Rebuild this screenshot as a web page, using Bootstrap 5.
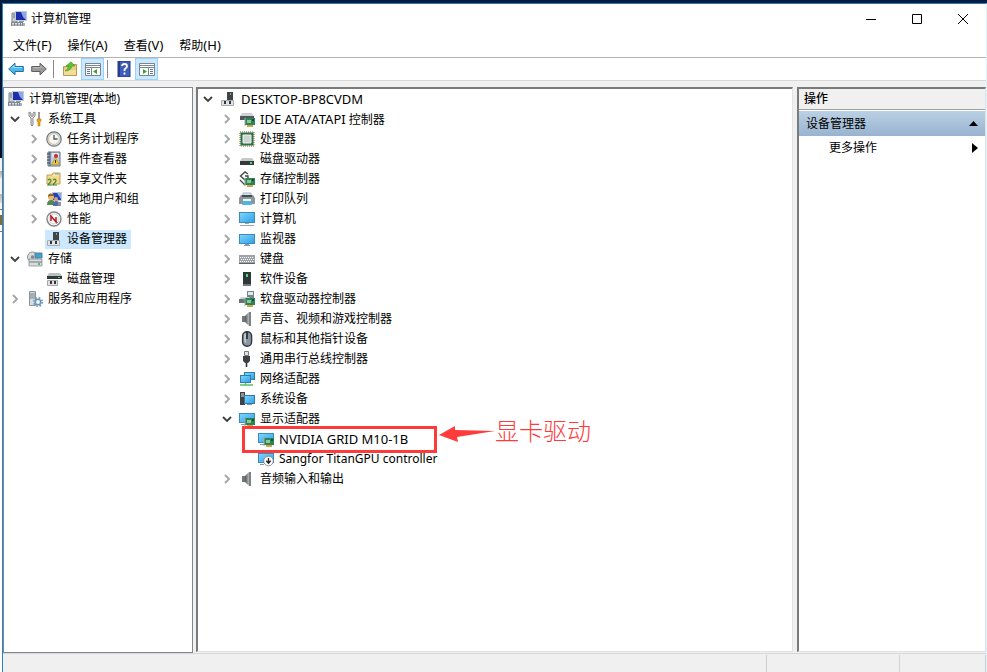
<!DOCTYPE html>
<html lang="zh-CN">
<head>
<meta charset="utf-8">
<meta name="viewport" content="width=device-width, initial-scale=1">
<title>计算机管理</title>
<link href="https://cdn.jsdelivr.net/npm/bootstrap@5.3.0/dist/css/bootstrap.min.css" rel="stylesheet">
<style>
body{font:12px/20px "Noto Sans","Noto Sans CJK SC",sans-serif;color:#000;background:#001d40}
.desk{width:2px;background:linear-gradient(#001a3a,#00102a 155px,#f3f3f3 155px,#f3f3f3 168px,#aaa 168px,#ddd 175px,#f3f3f3 175px,#f3f3f3 191px,#b5b5b5 191px,#ddd 200px,#f3f3f3 200px,#f3f3f3 206px,#777 206px,#777 207px,#fff 207px,#fff 212px,#77703a 212px,#77703a 222px,#fff 222px,#fff 228px,#777 228px,#777 229px,#fff 229px)}
.defs{width:0;height:0}
.strip{height:3px;background:#001d40}
.win{border-top:1px solid #2478b4;border-left:1px solid #2787c8;border-right:1px solid #dff3fa;background:#fff}
.titlebar{height:29px;padding-left:8px}
.cap{width:46px;height:28px;border:0;background:none;padding:0}
.plain{border:0;background:none;padding:0;color:inherit;line-height:20px}
.latin{font-size:13px}
.menus{height:25px;padding:0 10px;border-bottom:1px solid #b4b4b4}
.tools{height:23px;padding-left:1px;border-bottom:1px solid #d7d7d7}
.tool{height:22px;width:23px;border:0;background:none;padding:0;display:flex;align-items:center;justify-content:center}
.tool.on{background:#cce8ff;border:1px solid #99d1ff}
.rule{width:1px;height:18px;background:#8a8a8a;margin:0 4px 0 3px}
.work{background:#f0f0f0;padding-top:6px;gap:3px}
.scope{width:190px;border:1px solid #828790;background:#fff}
.sunk{border:solid;border-width:2px 1px 1px 2px;border-color:#7a7a7a #e3e3e3 #e3e3e3 #7a7a7a;background:#fff;margin-bottom:1px}
.actions{width:189px;margin-left:1px}
.tree,.tree ul{list-style:none;margin:0;padding:0}
.tree ul ul,.devs ul{padding-left:19px}
.scope .tree{padding:1px 0 0 3px}
.sunk .devs{padding-left:2px}
.node{display:flex;height:20px;align-items:center;white-space:nowrap}
.twist{width:16px;height:20px;border:0;background:none;padding:0;display:flex;align-items:center;justify-content:center;margin-right:3px}
.item{display:flex;align-items:center;gap:5px;height:19px;padding:0 4px 0 1px;color:#000;text-decoration:none}
.item.on{background:#cce8ff}
.ico{width:16px;height:16px;flex:none}
.frame{position:absolute;left:4px;top:-3px;width:195px;height:27px;border:3px solid #ff3a3a;pointer-events:none}
.callout{position:absolute;left:201px;top:-14px;display:flex;align-items:center;color:#ff3a3a;font:24px/30px "Noto Sans CJK SC",sans-serif;font-weight:300;white-space:nowrap}
.arrow{width:56px;height:16px;margin-top:8px}
.acthead{height:21px;background:#f0f0f0;border-bottom:1px solid #a0a0a0;padding-left:5px;font-weight:500;margin-bottom:1px}
.actbar{height:25px;width:100%;background:linear-gradient(#bbd0e4,#98b3d0);padding:0 7px}
.more{height:23px;width:100%;padding:0 7px 0 30px}
.status{height:19px;background:#f0f0f0;border-top:1px solid #d7d7d7}
.cell{border-left:1px solid #d0d0d0;margin-top:1px}
.cell-a{width:133px}
.cell-b{width:86px}
</style>
<script src="https://cdn.jsdelivr.net/npm/bootstrap@5.3.0/dist/js/bootstrap.bundle.min.js"></script>
</head>
<body class="vh-100 overflow-hidden d-flex flex-column">
<svg class="defs position-absolute" aria-hidden="true">
<defs><linearGradient id="scr" x1="0" y1="0" x2="1" y2="1"><stop stop-color="#7fd3fb"/><stop offset="1" stop-color="#2fa3ea"/></linearGradient>
<linearGradient id="met" x1="0" x2="1"><stop stop-color="#555"/><stop offset="1" stop-color="#bbb"/></linearGradient></defs>
<symbol id="open" viewBox="0 0 16 16"><path d="M4 6l4 4 4-4" fill="none" stroke="#404040" stroke-width="1.9"/></symbol>
<symbol id="shut" viewBox="0 0 16 16"><path d="M6 4l4 4-4 4" fill="none" stroke="#a6a6a6" stroke-width="1.9"/></symbol>
<symbol id="mmc" viewBox="0 0 16 16"><path d="M1 2h5v9H1z" fill="#c9ced4" stroke="#7c858e"/><path d="M2 4h3M2 6h3" stroke="#68737d"/><path d="M4 0h12v10H4z" fill="#c4c9d6"/><path d="M5 1h10v8H5z" fill="#1c2ea8"/><path d="M10 1h5v8l-3-3z" fill="#8fa5ef"/><path d="M8 10h5v1H8z" fill="#9299a3"/><path d="M0 11h12v4H0z" fill="#7e8790"/><path d="M1 12.500h10M1 14h10" stroke="#dce1e5" stroke-dasharray="2 1"/><path d="M12 12h2v3h-2z" fill="#aab0b7"/></symbol>
<symbol id="wrench" viewBox="0 0 16 16"><path d="M2 1v4l2 2v7q1 2 2 0V7l2-2V1L6 2v3H4V2z" fill="#e0e0e0" stroke="#888"/><path d="M11 1h2v7h-2z" fill="#999"/><path d="M10 8h4v2l-1 1v4h-2v-4l-1-1z" fill="#e8a713" stroke="#c07d00" stroke-width=".6"/></symbol>
<symbol id="clock" viewBox="0 0 16 16"><circle cx="8" cy="8" r="7.2" fill="#e5ddcf" stroke="#6f7780" stroke-width="1.2"/><circle cx="8" cy="8" r="5.4" fill="#fbf6ea" stroke="#b9b1a3" stroke-width=".7"/><path d="M8 4v4h3.5" fill="none" stroke="#345c84" stroke-width="1.3"/></symbol>
<symbol id="event" viewBox="0 0 16 16"><path d="M2 1h12v14H2z" fill="#b9cbe0" stroke="#60708a"/><path d="M4 1v14" stroke="#3d4c66"/><path d="M1 3h3M1 6h3M1 9h3M1 12h3" stroke="#444"/><path d="M6 3h7M6 5h7" stroke="#fff"/><circle cx="10" cy="5" r="2.1" fill="#cf2b25"/><path d="M9.500 7l4 6.500h-8z" fill="#f7c928" stroke="#b88b00" stroke-width=".6"/><path d="M9.500 9v3" stroke="#333"/></symbol>
<symbol id="share" viewBox="0 0 16 16"><path d="M1 4h5l1-2h7v11H1z" fill="#f3d88c" stroke="#c29f52"/><path d="M7 4h6" stroke="#fff4c3"/><path d="M9 3h4" stroke="#63a7d8"/><path d="M2 9q3-2 3 1l-3 4h4M7 9q3-2 3 1l-3 4h4" fill="none" stroke="#38862e" stroke-width="1.2"/></symbol>
<symbol id="users" viewBox="0 0 16 16"><path d="M6 1h10v9H6z" fill="#bfc7d2"/><path d="M7 2h8v7H7z" fill="#2342b7"/><path d="M11 2h4v6z" fill="#89abf0"/><circle cx="5" cy="6" r="3" fill="#e7b575"/><path d="M2 6q0-5 5-3l1 2H4z" fill="#8c6a24"/><path d="M1 14q0-5 4-5t4 5z" fill="#518a4b"/><circle cx="10" cy="8" r="2" fill="#dca16c"/><path d="M7 15q0-5 3-5 4 0 4 5z" fill="#536ea6"/><path d="M12 11h3v4h-3z" fill="#8e969c"/></symbol>
<symbol id="perf" viewBox="0 0 16 16"><circle cx="8" cy="8" r="7" fill="#fff" stroke="#858585" stroke-width="1.4"/><circle cx="8" cy="8" r="5" fill="none" stroke="#bbb" stroke-width=".7"/><path d="M5 10V5l5 6V6" fill="none" stroke="#b8161c" stroke-width="1.500"/><path d="M4 4l8 8" stroke="#b8161c" stroke-width=".7"/></symbol>
<symbol id="dev" viewBox="0 0 16 16"><path d="M7 1h6v8H7z" fill="#3f4447"/><path d="M10 2h1v2h-1z" fill="#7ab37d"/><path d="M1.500 9.500h12v5h-12z" fill="#e1e4e6" stroke="#a5abb0"/><path d="M4 10h2v3H4zM9 10h2v3H9z" fill="#30363a"/></symbol>
<symbol id="store" viewBox="0 0 16 16"><circle cx="5.500" cy="6" r="5" fill="#d8dcdd" stroke="#888f92"/><circle cx="5.500" cy="6" r="1.7" fill="#7f8789"/><path d="M8 2h7v5H8z" fill="#39a4da" stroke="#657b86"/><path d="M2 8h13v3H2zM2 11h13v4H2z" fill="#d8dcde" stroke="#7d868c" stroke-width=".7"/><path d="M11 13h2" stroke="#2bb346" stroke-width="1.5"/></symbol>
<symbol id="diskm" viewBox="0 0 16 16"><path d="M3 2h11l2 3H1z" fill="#bac0c2"/><path d="M1 5h15v3H1z" fill="#34393b"/><path d="M12 6h2v1h-2z" fill="#41e35e"/><path d="M1.500 9.500h10v5h-10z" fill="#e0e2e3" stroke="#a5a9ab"/><path d="M4 10h2v3H4zM8 10h2v3H8z" fill="#333"/></symbol>
<symbol id="svc" viewBox="0 0 16 16"><path d="M2.500.5h6v14h-6z" fill="#d4dde1" stroke="#899399"/><path d="M3 3h5M3 5h5M3 7h5" stroke="#728087"/><circle cx="11" cy="11" r="2.800" fill="#eef4f8" stroke="#6795b9" stroke-width="1.600"/><circle cx="11" cy="11" r="4.300" fill="none" stroke="#6795b9" stroke-width="1.400" stroke-dasharray="1.700 1.700"/></symbol>
<symbol id="board" viewBox="0 0 16 16"><path d="M6 7h10v7H6z" fill="#2b8453"/><path d="M8 9h4v3H8z" fill="#8ec59f"/><path d="M13 8h2v2h-2z" fill="#174f36"/><path d="M8 14h6v2H8z" fill="#d2a540"/><path d="M6 7v8" stroke="#a7aaa6"/></symbol>
<symbol id="ide" viewBox="0 0 16 16"><path d="M3 2h10l2 3H1z" fill="#d0d3d4"/><path d="M1 5h14v4H1z" fill="#52595d"/><use href="#board" width="16" height="16"/></symbol>
<symbol id="cpu" viewBox="0 0 16 16"><path d="M1 1h14v14H1z" fill="none" stroke="#ab9a4d" stroke-width="1.500" stroke-dasharray="1 1"/><path d="M1.500 1.500h13v13h-13z" fill="#2d7151"/><path d="M4 4h8v8H4z" fill="#cdd6d2" stroke="#eef1ee"/></symbol>
<symbol id="disk" viewBox="0 0 16 16"><path d="M3 7h10l2 3H1z" fill="#c5c9cb"/><path d="M1 10h14v4H1z" fill="#35393c"/><path d="M11 11h2v2h-2z" fill="#42e068"/></symbol>
<symbol id="ctrl" viewBox="0 0 16 16"><path d="M9 3L6 1 1.500 5 6 9l3-2V5H6M1 9l5 5" fill="none" stroke="#464b4e" stroke-width="1.400"/><use href="#board" width="16" height="16"/></symbol>
<symbol id="print" viewBox="0 0 16 16"><path d="M4 2h8v3H4z" fill="#d7e8ee" stroke="#a3b4bc"/><path d="M2 4h12l2 3v6H0V7z" fill="#8b979d"/><path d="M3 4h10v2H3z" fill="#454d53"/><path d="M5 9h6l2 5H3z" fill="#4fb6df"/><path d="M4 8h8v2H4z" fill="#edf7fa"/></symbol>
<symbol id="pc" viewBox="0 0 16 16"><path d="M0 1h16v11H0z" fill="#3b8cba"/><path d="M1 2h14v9H1z" fill="url(#scr)"/><path d="M6 12h4v1H6zM1 14h14v1H1z" fill="#9aa4ab"/></symbol>
<symbol id="mon" viewBox="0 0 16 16"><path d="M0 3h16v10H0z" fill="#3b8cba"/><path d="M1 4h14v8H1z" fill="url(#scr)"/><path d="M6 13h4v1H6zM5 14h6v1H5z" fill="#7f9ead"/></symbol>
<symbol id="keys" viewBox="0 0 16 16"><path d="M0 4h16v9H0z" fill="#9da3a8"/><path d="M0 12h16v1H0z" fill="#5c6369"/><path d="M1 6.500h14M2 8.500h13M1 10.500h14" stroke="#fff" stroke-dasharray="1 1"/></symbol>
<symbol id="soft" viewBox="0 0 16 16"><path d="M4 1h8v14H4z" fill="#30373a"/><path d="M4 13h8v2H4z" fill="#777"/><path d="M7 3h2v3H7z" fill="#44e260"/></symbol>
<symbol id="floppy" viewBox="0 0 16 16"><path d="M8 0h7v8H8z" fill="#74858f"/><path d="M9 1h5v3H9z" fill="#dde9ee"/><path d="M2 6h8l3 3H0z" fill="#cbd0d2"/><path d="M0 8h12v4H0z" fill="#697176"/><use href="#board" width="16" height="16"/></symbol>
<symbol id="sound" viewBox="0 0 16 16"><path d="M3 5h3v6H3z" fill="#6f777c"/><path d="M6 5l4-4v14l-4-4z" fill="url(#met)"/><path d="M10 1h2v14h-2z" fill="#7c8387"/></symbol>
<symbol id="mouse" viewBox="0 0 16 16"><rect x="3.6" y=".7" width="9" height="14.6" rx="4.3" fill="#8b96a0" stroke="#303a43" stroke-width="1.4"/><path d="M5 4q0-2 2-2v10q-2-1-2-4z" fill="#bdc5cb"/><path d="M8 1v7" stroke="#182128" stroke-width="1.5"/></symbol>
<symbol id="usb" viewBox="0 0 16 16"><path d="M5.500.5h4v4h-4z" fill="#e3e3e3" stroke="#777"/><path d="M4 5h7v5l-2 2H6l-2-2z" fill="#3d4143"/><path d="M7.500 12v4" stroke="#333" stroke-width="1.6"/></symbol>
<symbol id="net" viewBox="0 0 16 16"><path d="M5 1h11v8H5z" fill="#2a7fac"/><path d="M6 2h9v6H6z" fill="url(#scr)"/><path d="M1 4h11v8H1z" fill="#2a7fac"/><path d="M2 5h9v6H2z" fill="url(#scr)"/><path d="M6.500 12v2M1 14h13" stroke="#5bc060" stroke-width="1.500"/></symbol>
<symbol id="sys" viewBox="0 0 16 16"><path d="M1 1h5v13H1z" fill="#3c4448"/><path d="M2 3h3M2 5h3" stroke="#ddd"/><path d="M5 4h11v9H5z" fill="#347ca6"/><path d="M6 5h9v7H6z" fill="url(#scr)"/><path d="M8 13h5v1H8z" fill="#80939e"/></symbol>
<symbol id="gpu" viewBox="0 0 16 16"><path d="M0 2h16v10H0z" fill="#3b8cba"/><path d="M1 3h14v8H1z" fill="url(#scr)"/><path d="M2 13h4v1H2z" fill="#8999a2"/><use href="#board" width="16" height="16"/></symbol>
<symbol id="gpuoff" viewBox="0 0 16 16"><path d="M0 2h16v10H0z" fill="#3b8cba"/><path d="M1 3h14v8H1z" fill="url(#scr)"/><path d="M2 13h4v1H2z" fill="#8999a2"/><circle cx="10.500" cy="10" r="4.800" fill="#fff" stroke="#777" stroke-width=".8"/><path d="M10.500 7v5M8.300 9.700l2.200 2.500 2.200-2.500" fill="none" stroke="#222" stroke-width="1.400"/></symbol>
<symbol id="back" viewBox="0 0 16 16"><path d="M.700 8l6.300-5.800v3.300h8.300v5H7v3.300z" fill="#4db8ec" stroke="#1e6fa5"/><path d="M3 7.500l3-3v2h8" fill="none" stroke="#a3e0fa"/></symbol>
<symbol id="fwd" viewBox="0 0 16 16"><path d="M15.300 8L9 2.200v3.300H.700v5H9v3.300z" fill="#999" stroke="#606060"/><path d="M2 6.700h8v-2" fill="none" stroke="#bdbdbd"/></symbol>
<symbol id="up" viewBox="0 0 16 16"><path d="M1.500 5.500H7l1-2h6.500v11h-13z" fill="#e8cc80" stroke="#b89a55"/><path d="M2 9h12v5H2z" fill="#f3dd9b"/><path d="M3 10q3-1 3.500-5H4L9 .8 13 5h-3Q9 10 3 10z" fill="#55c435" stroke="#36891f" stroke-width=".5"/></symbol>
<symbol id="paneL" viewBox="0 0 16 16"><path d="M.5 2.500h15v12H.5z" fill="#fff" stroke="#7b858c"/><path d="M1 4.500h14M1 6.500h14M6.500 7v7" stroke="#7b858c"/><path d="M2 8.500h3M2 10.500h3M2 12.500h3" stroke="#557d9a"/><path d="M12 8v5L8 10.500z" fill="#38a72d"/></symbol>
<symbol id="paneR" viewBox="0 0 16 16"><path d="M.5 2.500h15v12H.5z" fill="#fff" stroke="#7b858c"/><path d="M1 4.500h14M1 6.500h14M9.500 7v7" stroke="#7b858c"/><path d="M11 8.500h3M11 10.500h3M11 12.500h3" stroke="#557d9a"/><path d="M4 8v5l4-2.500z" fill="#38a72d"/></symbol>
<symbol id="help" viewBox="0 0 16 16"><path d="M2 0h12v16H2z" fill="#3f5fb9" stroke="#25387d"/><path d="M3 0v16" stroke="#263b91" stroke-width="2"/><path d="M6 5q0-2 2.500-2T11 5.200q0 1.300-1.300 2T8.500 9.500V10M8.500 11.500v2" fill="none" stroke="#fff" stroke-width="1.800"/></symbol>
</svg>
<div class="strip flex-shrink-0"></div>
<div class="d-flex flex-grow-1 overflow-hidden">
<div class="desk flex-shrink-0"></div>
<div class="win flex-grow-1 d-flex flex-column overflow-hidden">
<header class="titlebar d-flex align-items-start flex-shrink-0">
 <div class="d-flex align-items-center gap-1 h-100 me-auto"><svg class="ico"><use href="#mmc"/></svg><span>计算机管理</span></div>
 <button class="cap" aria-label="最小化"><svg width="12" height="12"><path d="M1 6.500h10" stroke="#000"/></svg></button>
 <button class="cap" aria-label="最大化"><svg width="12" height="12"><path d="M1.500 1.500h9v9h-9z" fill="none" stroke="#000"/></svg></button>
 <button class="cap" aria-label="关闭"><svg width="12" height="12"><path d="M1 1l10 10M11 1L1 11" stroke="#000"/></svg></button>
</header>
<nav class="menus d-flex gap-3 align-items-center flex-shrink-0"><button class="plain">文件<span class="latin">(F)</span></button><button class="plain">操作<span class="latin">(A)</span></button><button class="plain">查看<span class="latin">(V)</span></button><button class="plain">帮助<span class="latin">(H)</span></button></nav>
<div class="tools d-flex align-items-center flex-shrink-0">
 <button class="tool" aria-label="后退"><svg class="ico"><use href="#back"/></svg></button>
 <button class="tool" aria-label="前进"><svg class="ico"><use href="#fwd"/></svg></button>
 <span class="rule"></span>
 <button class="tool" aria-label="向上"><svg class="ico"><use href="#up"/></svg></button>
 <button class="tool on" aria-label="显示控制台树"><svg class="ico"><use href="#paneL"/></svg></button>
 <span class="rule"></span>
 <button class="tool" aria-label="帮助"><svg class="ico"><use href="#help"/></svg></button>
 <button class="tool on" aria-label="显示操作窗格"><svg class="ico"><use href="#paneR"/></svg></button>
</div>
<main class="work d-flex flex-grow-1 overflow-hidden">
<aside class="scope flex-shrink-0 overflow-hidden"><ul class="tree">
 <li><div class="node"><a href="#" class="item"><svg class="ico"><use href="#mmc"/></svg>计算机管理(本地)</a></div>
 <ul>
  <li><div class="node"><button class="twist" aria-label="折叠"><svg class="ico"><use href="#open"/></svg></button><a href="#" class="item"><svg class="ico"><use href="#wrench"/></svg>系统工具</a></div>
  <ul>
   <li class="node"><button class="twist" aria-label="展开"><svg class="ico"><use href="#shut"/></svg></button><a href="#" class="item"><svg class="ico"><use href="#clock"/></svg>任务计划程序</a></li>
   <li class="node"><button class="twist" aria-label="展开"><svg class="ico"><use href="#shut"/></svg></button><a href="#" class="item"><svg class="ico"><use href="#event"/></svg>事件查看器</a></li>
   <li class="node"><button class="twist" aria-label="展开"><svg class="ico"><use href="#shut"/></svg></button><a href="#" class="item"><svg class="ico"><use href="#share"/></svg>共享文件夹</a></li>
   <li class="node"><button class="twist" aria-label="展开"><svg class="ico"><use href="#shut"/></svg></button><a href="#" class="item"><svg class="ico"><use href="#users"/></svg>本地用户和组</a></li>
   <li class="node"><button class="twist" aria-label="展开"><svg class="ico"><use href="#shut"/></svg></button><a href="#" class="item"><svg class="ico"><use href="#perf"/></svg>性能</a></li>
   <li class="node"><span class="twist"></span><a href="#" class="item on"><svg class="ico"><use href="#dev"/></svg>设备管理器</a></li>
  </ul></li>
  <li><div class="node"><button class="twist" aria-label="折叠"><svg class="ico"><use href="#open"/></svg></button><a href="#" class="item"><svg class="ico"><use href="#store"/></svg>存储</a></div>
  <ul><li class="node"><span class="twist"></span><a href="#" class="item"><svg class="ico"><use href="#diskm"/></svg>磁盘管理</a></li></ul></li>
  <li class="node"><button class="twist" aria-label="展开"><svg class="ico"><use href="#shut"/></svg></button><a href="#" class="item"><svg class="ico"><use href="#svc"/></svg>服务和应用程序</a></li>
 </ul></li>
</ul></aside>
<section class="sunk flex-grow-1"><ul class="tree devs">
 <li><div class="node"><button class="twist" aria-label="折叠"><svg class="ico"><use href="#open"/></svg></button><a href="#" class="item latin"><svg class="ico"><use href="#dev"/></svg>DESKTOP-BP8CVDM</a></div>
 <ul>
  <li class="node"><button class="twist" aria-label="展开"><svg class="ico"><use href="#shut"/></svg></button><a href="#" class="item"><svg class="ico"><use href="#ide"/></svg><span><span class="latin">IDE ATA/ATAPI</span> 控制器</span></a></li>
  <li class="node"><button class="twist" aria-label="展开"><svg class="ico"><use href="#shut"/></svg></button><a href="#" class="item"><svg class="ico"><use href="#cpu"/></svg>处理器</a></li>
  <li class="node"><button class="twist" aria-label="展开"><svg class="ico"><use href="#shut"/></svg></button><a href="#" class="item"><svg class="ico"><use href="#disk"/></svg>磁盘驱动器</a></li>
  <li class="node"><button class="twist" aria-label="展开"><svg class="ico"><use href="#shut"/></svg></button><a href="#" class="item"><svg class="ico"><use href="#ctrl"/></svg>存储控制器</a></li>
  <li class="node"><button class="twist" aria-label="展开"><svg class="ico"><use href="#shut"/></svg></button><a href="#" class="item"><svg class="ico"><use href="#print"/></svg>打印队列</a></li>
  <li class="node"><button class="twist" aria-label="展开"><svg class="ico"><use href="#shut"/></svg></button><a href="#" class="item"><svg class="ico"><use href="#pc"/></svg>计算机</a></li>
  <li class="node"><button class="twist" aria-label="展开"><svg class="ico"><use href="#shut"/></svg></button><a href="#" class="item"><svg class="ico"><use href="#mon"/></svg>监视器</a></li>
  <li class="node"><button class="twist" aria-label="展开"><svg class="ico"><use href="#shut"/></svg></button><a href="#" class="item"><svg class="ico"><use href="#keys"/></svg>键盘</a></li>
  <li class="node"><button class="twist" aria-label="展开"><svg class="ico"><use href="#shut"/></svg></button><a href="#" class="item"><svg class="ico"><use href="#soft"/></svg>软件设备</a></li>
  <li class="node"><button class="twist" aria-label="展开"><svg class="ico"><use href="#shut"/></svg></button><a href="#" class="item"><svg class="ico"><use href="#floppy"/></svg>软盘驱动器控制器</a></li>
  <li class="node"><button class="twist" aria-label="展开"><svg class="ico"><use href="#shut"/></svg></button><a href="#" class="item"><svg class="ico"><use href="#sound"/></svg>声音、视频和游戏控制器</a></li>
  <li class="node"><button class="twist" aria-label="展开"><svg class="ico"><use href="#shut"/></svg></button><a href="#" class="item"><svg class="ico"><use href="#mouse"/></svg>鼠标和其他指针设备</a></li>
  <li class="node"><button class="twist" aria-label="展开"><svg class="ico"><use href="#shut"/></svg></button><a href="#" class="item"><svg class="ico"><use href="#usb"/></svg>通用串行总线控制器</a></li>
  <li class="node"><button class="twist" aria-label="展开"><svg class="ico"><use href="#shut"/></svg></button><a href="#" class="item"><svg class="ico"><use href="#net"/></svg>网络适配器</a></li>
  <li class="node"><button class="twist" aria-label="展开"><svg class="ico"><use href="#shut"/></svg></button><a href="#" class="item"><svg class="ico"><use href="#sys"/></svg>系统设备</a></li>
  <li><div class="node"><button class="twist" aria-label="折叠"><svg class="ico"><use href="#open"/></svg></button><a href="#" class="item"><svg class="ico"><use href="#gpu"/></svg>显示适配器</a></div>
  <ul>
   <li class="node position-relative"><span class="twist"></span><a href="#" class="item latin"><svg class="ico"><use href="#gpu"/></svg>NVIDIA GRID M10-1B</a>
    <div class="frame"></div>
    <div class="callout"><svg class="arrow" viewBox="0 0 56 16"><path d="M0 9L16 0v4l40 1-38 6 1 5z" fill="#ff3a3a"/></svg>显卡驱动</div></li>
   <li class="node"><span class="twist"></span><a href="#" class="item"><svg class="ico"><use href="#gpuoff"/></svg>Sangfor TitanGPU controller</a></li>
  </ul></li>
  <li class="node"><button class="twist" aria-label="展开"><svg class="ico"><use href="#shut"/></svg></button><a href="#" class="item"><svg class="ico"><use href="#sound"/></svg>音频输入和输出</a></li>
 </ul></li>
</ul></section>
<aside class="sunk actions flex-shrink-0">
 <div class="acthead">操作</div>
 <button class="plain actbar d-flex align-items-center justify-content-between">设备管理器<svg width="9" height="5"><path d="M0 5L4.500 0 9 5z"/></svg></button>
 <button class="plain more d-flex align-items-center justify-content-between">更多操作<svg width="6" height="10"><path d="M0 0l6 5-6 5z"/></svg></button>
</aside>
</main>
<footer class="status d-flex justify-content-end flex-shrink-0"><div class="cell cell-a"></div><div class="cell cell-b"></div><div class="cell"></div></footer>
</div></div>
</body>
</html>
